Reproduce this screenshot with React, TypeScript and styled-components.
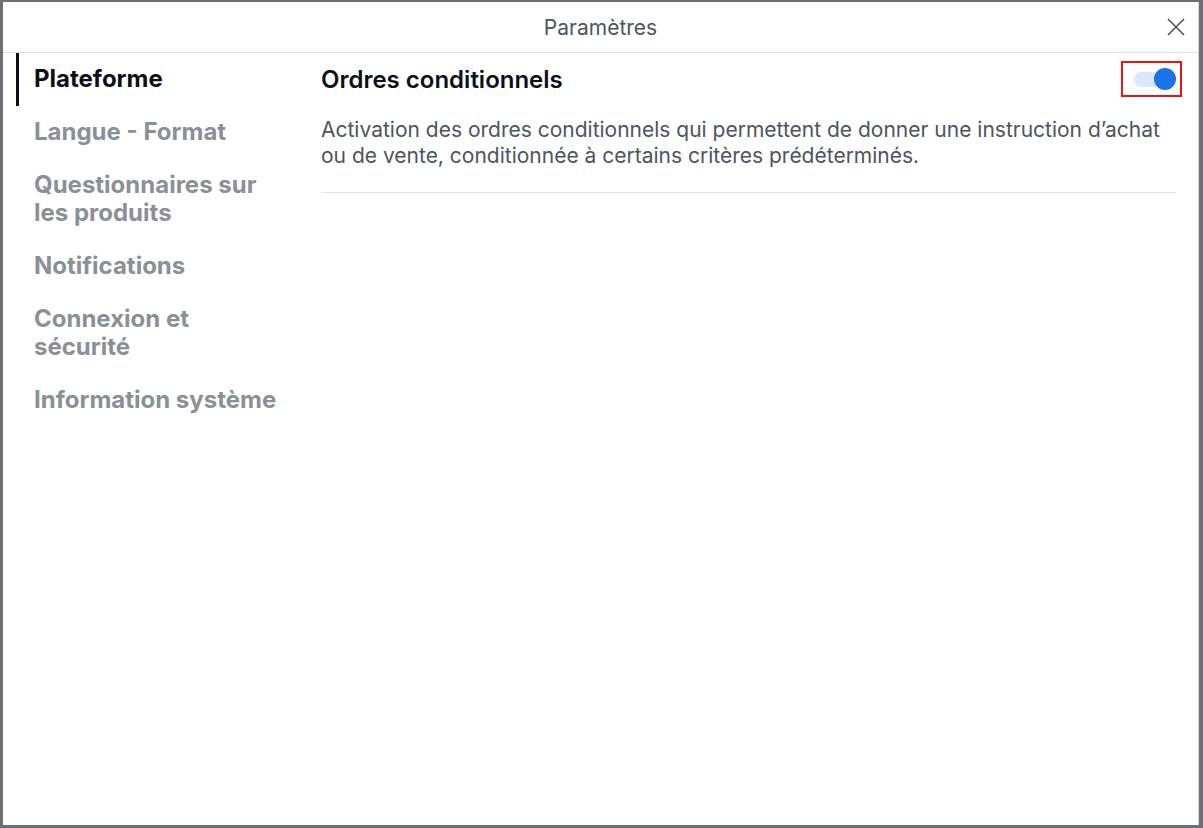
import { useState } from 'react';
import styled, { createGlobalStyle } from 'styled-components';

const GlobalStyle = createGlobalStyle`
  html, body {
    margin: 0;
    padding: 0;
    height: 100%;
    background: #6b7076;
  }
  body {
    font-family: Inter, "Noto Sans", sans-serif;
  }
  #root {
    height: 100%;
  }
`;

const Backdrop = styled.div`
  height: 828px;
  box-sizing: border-box;
  padding: 2px 4px 3px 3px;
`;

const Modal = styled.div`
  height: 100%;
  background: #ffffff;
  display: flex;
  flex-direction: column;
  border-right: 1px solid #d6d9de;
`;

const Header = styled.header`
  height: 50px;
  flex: none;
  display: flex;
  align-items: center;
  justify-content: center;
  position: relative;
  border-bottom: 1px solid #dfe1e6;
`;

const Title = styled.h1`
  margin: 0;
  font-size: 21px;
  font-weight: 400;
  color: #4b5563;
`;

const CloseButton = styled.button`
  position: absolute;
  right: 10px;
  top: 13px;
  width: 24px;
  height: 24px;
  padding: 0;
  border: none;
  background: none;
  cursor: pointer;
  color: #4b5563;
  display: flex;
  align-items: center;
  justify-content: center;
`;

const Body = styled.div`
  flex: 1;
  display: flex;
  padding-left: 13px;
`;

const Sidebar = styled.nav`
  width: 305px;
  flex: none;
  display: flex;
  flex-direction: column;
`;

const NavItem = styled.a<{ $active?: boolean }>`
  display: block;
  padding: 12px 0 13px 15px;
  border-left: 3px solid ${(p) => (p.$active ? '#0b1018' : 'transparent')};
  font-size: 24px;
  line-height: 28px;
  font-weight: 700;
  color: ${(p) => (p.$active ? '#0b1018' : '#8a9098')};
  cursor: pointer;
  max-width: 248px;
`;

const Content = styled.section`
  flex: 1;
  padding-right: 22px;
`;

const Setting = styled.div`
  border-bottom: 1px solid #e2e4e8;
  padding-bottom: 23px;
`;

const SettingHead = styled.div`
  height: 52px;
  display: flex;
  align-items: center;
  justify-content: space-between;
`;

const SettingTitle = styled.h2`
  margin: 0;
  font-size: 24px;
  font-weight: 600;
  color: #0b1018;
`;

const Highlight = styled.div`
  margin-right: -6px;
  padding: 5px 4px 5px 11px;
  border: 2px solid #e8141b;
  display: flex;
  align-items: center;
`;

const SwitchTrack = styled.button<{ $on: boolean }>`
  position: relative;
  width: 42px;
  height: 22px;
  padding: 0;
  border: none;
  background: none;
  cursor: pointer;

  &::before {
    content: '';
    position: absolute;
    left: 0;
    right: 6px;
    top: 4px;
    height: 15px;
    border-radius: 8px;
    background: ${(p) => (p.$on ? '#dbe7fb' : '#e2e4e8')};
  }
`;

const SwitchThumb = styled.span<{ $on: boolean }>`
  position: absolute;
  top: 0;
  left: ${(p) => (p.$on ? '20px' : '0')};
  width: 22px;
  height: 22px;
  border-radius: 50%;
  background: ${(p) => (p.$on ? '#1a73e8' : '#9aa0a6')};
`;

const Description = styled.p`
  margin: 12px 0 0;
  font-size: 21px;
  line-height: 26px;
  color: #4b5563;
`;

const navItems = [
  'Plateforme',
  'Langue - Format',
  'Questionnaires sur les produits',
  'Notifications',
  'Connexion et sécurité',
  'Information système',
];

const App = () => {
  const [active, setActive] = useState(0);
  const [enabled, setEnabled] = useState(true);

  return (
    <>
      <GlobalStyle />
      <Backdrop>
        <Modal>
          <Header>
            <Title>Paramètres</Title>
            <CloseButton aria-label="Fermer">
              <svg width="20" height="20" viewBox="0 0 20 20" fill="none" stroke="currentColor" strokeWidth="1.6">
                <path d="M2 2 L18 18 M18 2 L2 18" />
              </svg>
            </CloseButton>
          </Header>
          <Body>
            <Sidebar>
              {navItems.map((label, i) => (
                <NavItem key={label} $active={i === active} onClick={() => setActive(i)}>
                  {label}
                </NavItem>
              ))}
            </Sidebar>
            <Content>
              <Setting>
                <SettingHead>
                  <SettingTitle>Ordres conditionnels</SettingTitle>
                  <Highlight>
                    <SwitchTrack $on={enabled} onClick={() => setEnabled(!enabled)} aria-label="Activer">
                      <SwitchThumb $on={enabled} />
                    </SwitchTrack>
                  </Highlight>
                </SettingHead>
                <Description>
                  Activation des ordres conditionnels qui permettent de donner une instruction d’achat
                  ou de vente, conditionnée à certains critères prédéterminés.
                </Description>
              </Setting>
            </Content>
          </Body>
        </Modal>
      </Backdrop>
    </>
  );
};

export default App;
